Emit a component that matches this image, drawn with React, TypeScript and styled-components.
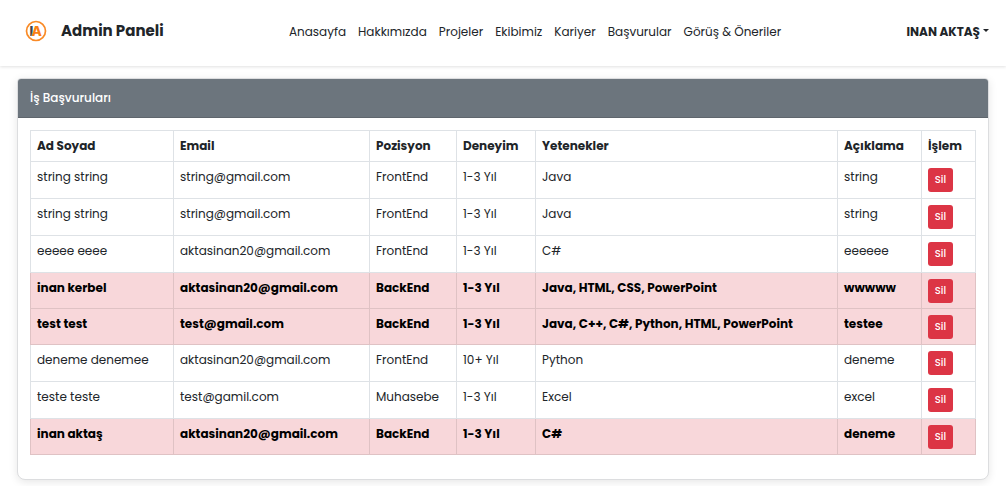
import React from 'react';
import styled, { createGlobalStyle } from 'styled-components';

const GlobalStyle = createGlobalStyle`
  *, *::before, *::after { box-sizing: border-box; }
  body {
    margin: 0;
    background: #fff;
    color: #212529;
    font-family: Poppins, Inter, "Liberation Sans", sans-serif;
    font-size: 12px;
    line-height: 18px;
  }
`;

const Navbar = styled.header`
  display: flex;
  align-items: center;
  justify-content: space-between;
  min-height: 66px;
  padding: 0 17px 4px 25px;
  background: #fff;
  box-shadow: 0 1px 3px rgba(0, 0, 0, 0.12);
`;

const Brand = styled.a`
  display: flex;
  align-items: center;
  gap: 14px;
  color: #212529;
  font-size: 15px;
  font-weight: 700;
  line-height: 24px;
  text-decoration: none;
`;

const Menu = styled.nav`
  display: flex;
  gap: 12px;
  padding-top: 2px;
`;

const MenuLink = styled.a`
  color: #212529;
  text-decoration: none;
`;

const UserButton = styled.button`
  display: flex;
  align-items: center;
  gap: 3px;
  padding: 2px 0 0;
  border: 0;
  background: none;
  color: #212529;
  font: inherit;
  font-weight: 700;
  cursor: pointer;

  &::after {
    content: '';
    margin-bottom: 3px;
    border-top: 3px solid;
    border-right: 3px solid transparent;
    border-left: 3px solid transparent;
  }
`;

const Card = styled.main`
  margin: 12px 17px 6px;
  border: 1px solid #dcdddf;
  border-radius: 4px 4px 8px 8px;
  background: #fff;
  box-shadow: 0 2px 8px rgba(0, 0, 0, 0.1);
`;

const CardHeader = styled.h1`
  margin: 0;
  padding: 10px 12px;
  border-bottom: 1px solid #5f666d;
  border-radius: 3px 3px 0 0;
  background: #6c757d;
  color: #fff;
  font-size: 12px;
  font-weight: 500;
`;

const CardBody = styled.div`
  padding: 12px 12px 24px;
`;

const Table = styled.table`
  width: 100%;
  border-collapse: collapse;
  table-layout: fixed;
`;

const Column = styled.col<{ $width?: number }>`
  width: ${({ $width }) => ($width ? `${$width}px` : 'auto')};
`;

const HeadCell = styled.th`
  padding: 6px;
  border: 1px solid #dee2e6;
  font-weight: 700;
  text-align: left;
  white-space: nowrap;
`;

const Row = styled.tr<{ $highlighted: boolean }>`
  background: ${({ $highlighted }) => ($highlighted ? '#f8d7da' : '#fff')};
  color: ${({ $highlighted }) => ($highlighted ? '#000' : '#212529')};
  font-weight: ${({ $highlighted }) => ($highlighted ? 700 : 400)};

  td {
    height: ${({ $highlighted }) => ($highlighted ? 36 : 37)}px;
    border-color: ${({ $highlighted }) => ($highlighted ? '#dfc2c4' : '#dee2e6')};
  }
`;

const Cell = styled.td`
  padding: 6px 6px 5px;
  border: 1px solid;
  vertical-align: top;
  white-space: nowrap;
`;

const DeleteButton = styled.button`
  display: block;
  width: 25px;
  height: 24px;
  padding: 0;
  border: 0;
  border-radius: 3px;
  background: #dc3545;
  color: #fff;
  font: inherit;
  font-size: 10px;
  font-weight: 500;
  cursor: pointer;
`;

const LogoMark = () => (
  <svg width="22" height="22" viewBox="0 0 22 22" aria-hidden="true">
    <circle cx="11" cy="11" r="9.5" fill="#fff" stroke="#f98a26" strokeWidth="1.7" />
    <g fontFamily="Inter, sans-serif" fontWeight="800" fontSize="13.5">
      <text x="4.6" y="16" fill="#3d4450">I</text>
      <text x="6.6" y="16" fill="#f97f14" stroke="#fff" strokeWidth="0.6" paintOrder="stroke">A</text>
    </g>
  </svg>
);

const menu = ['Anasayfa', 'Hakkımızda', 'Projeler', 'Ekibimiz', 'Kariyer', 'Başvurular', 'Görüş & Öneriler'];

const columns: { title: string; width?: number }[] = [
  { title: 'Ad Soyad', width: 143 },
  { title: 'Email', width: 196 },
  { title: 'Pozisyon', width: 87 },
  { title: 'Deneyim', width: 79 },
  { title: 'Yetenekler' },
  { title: 'Açıklama', width: 84 },
  { title: 'İşlem', width: 54 },
];

const applications = [
  { values: ['string string', 'string@gmail.com', 'FrontEnd', '1-3 Yıl', 'Java', 'string'] },
  { values: ['string string', 'string@gmail.com', 'FrontEnd', '1-3 Yıl', 'Java', 'string'] },
  { values: ['eeeee eeee', 'aktasinan20@gmail.com', 'FrontEnd', '1-3 Yıl', 'C#', 'eeeeee'] },
  { values: ['inan kerbel', 'aktasinan20@gmail.com', 'BackEnd', '1-3 Yıl', 'Java, HTML, CSS, PowerPoint', 'wwwww'], highlighted: true },
  { values: ['test test', 'test@gmail.com', 'BackEnd', '1-3 Yıl', 'Java, C++, C#, Python, HTML, PowerPoint', 'testee'], highlighted: true },
  { values: ['deneme denemee', 'aktasinan20@gmail.com', 'FrontEnd', '10+ Yıl', 'Python', 'deneme'] },
  { values: ['teste teste', 'test@gamil.com', 'Muhasebe', '1-3 Yıl', 'Excel', 'excel'] },
  { values: ['inan aktaş', 'aktasinan20@gmail.com', 'BackEnd', '1-3 Yıl', 'C#', 'deneme'], highlighted: true },
];

export default function App() {
  return (
    <>
      <GlobalStyle />
      <Navbar>
        <Brand href="#">
          <LogoMark />
          Admin Paneli
        </Brand>
        <Menu>
          {menu.map((item) => (
            <MenuLink key={item} href="#">{item}</MenuLink>
          ))}
        </Menu>
        <UserButton type="button">INAN AKTAŞ</UserButton>
      </Navbar>
      <Card>
        <CardHeader>İş Başvuruları</CardHeader>
        <CardBody>
          <Table>
            <colgroup>
              {columns.map(({ title, width }) => (
                <Column key={title} $width={width} />
              ))}
            </colgroup>
            <thead>
              <tr>
                {columns.map(({ title }) => (
                  <HeadCell key={title} scope="col">{title}</HeadCell>
                ))}
              </tr>
            </thead>
            <tbody>
              {applications.map(({ values, highlighted = false }, index) => (
                <Row key={index} $highlighted={highlighted}>
                  {values.map((value, column) => (
                    <Cell key={column}>{value}</Cell>
                  ))}
                  <Cell>
                    <DeleteButton type="button">Sil</DeleteButton>
                  </Cell>
                </Row>
              ))}
            </tbody>
          </Table>
        </CardBody>
      </Card>
    </>
  );
}
